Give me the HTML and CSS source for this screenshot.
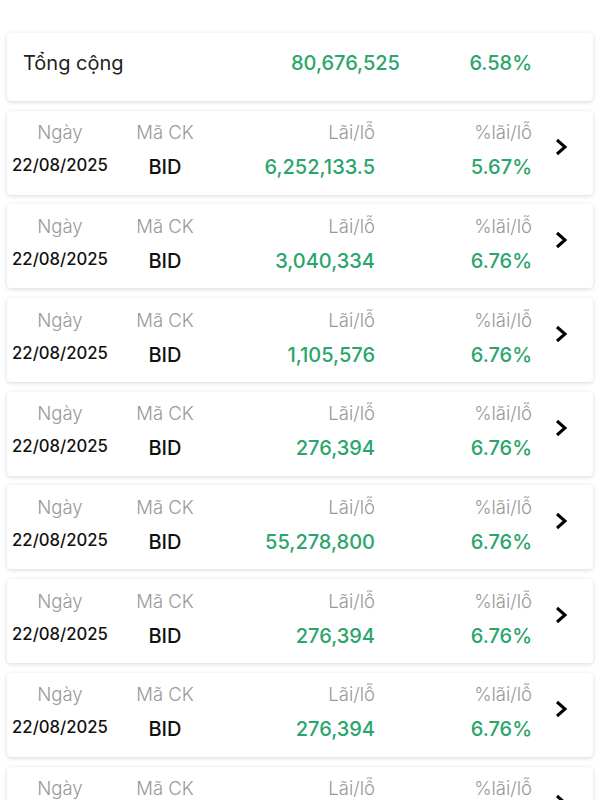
FILE: index.html
```html
<!doctype html>
<html lang="vi">
<head>
    <meta charset="utf-8">
    <title>Lãi/lỗ</title>
    <link rel="stylesheet" href="styles.css">
</head>
<body>
<div class="list">
    <div class="card total">
        <span class="total-name">Tổng cộng</span>
        <span class="total-sum green">80,676,525</span>
        <span class="total-pct green">6.58%</span>
    </div>

    <div class="card row">
        <span class="label c-date">Ngày</span>
        <span class="label c-code">Mã CK</span>
        <span class="label c-pl">Lãi/lỗ</span>
        <span class="label c-pct">%lãi/lỗ</span>
        <span class="chev"><svg width="14" height="18" viewBox="0 0 14 18"><path d="M3 2l8 7-8 7" fill="none" stroke="#000" stroke-width="3"/></svg></span>
        <span class="date c-date">22/08/2025</span>
        <span class="code c-code">BID</span>
        <span class="num green c-pl">6,252,133.5</span>
        <span class="num green c-pct">5.67%</span>
    </div>

    <div class="card row">
        <span class="label c-date">Ngày</span>
        <span class="label c-code">Mã CK</span>
        <span class="label c-pl">Lãi/lỗ</span>
        <span class="label c-pct">%lãi/lỗ</span>
        <span class="chev"><svg width="14" height="18" viewBox="0 0 14 18"><path d="M3 2l8 7-8 7" fill="none" stroke="#000" stroke-width="3"/></svg></span>
        <span class="date c-date">22/08/2025</span>
        <span class="code c-code">BID</span>
        <span class="num green c-pl">3,040,334</span>
        <span class="num green c-pct">6.76%</span>
    </div>

    <div class="card row">
        <span class="label c-date">Ngày</span>
        <span class="label c-code">Mã CK</span>
        <span class="label c-pl">Lãi/lỗ</span>
        <span class="label c-pct">%lãi/lỗ</span>
        <span class="chev"><svg width="14" height="18" viewBox="0 0 14 18"><path d="M3 2l8 7-8 7" fill="none" stroke="#000" stroke-width="3"/></svg></span>
        <span class="date c-date">22/08/2025</span>
        <span class="code c-code">BID</span>
        <span class="num green c-pl">1,105,576</span>
        <span class="num green c-pct">6.76%</span>
    </div>

    <div class="card row">
        <span class="label c-date">Ngày</span>
        <span class="label c-code">Mã CK</span>
        <span class="label c-pl">Lãi/lỗ</span>
        <span class="label c-pct">%lãi/lỗ</span>
        <span class="chev"><svg width="14" height="18" viewBox="0 0 14 18"><path d="M3 2l8 7-8 7" fill="none" stroke="#000" stroke-width="3"/></svg></span>
        <span class="date c-date">22/08/2025</span>
        <span class="code c-code">BID</span>
        <span class="num green c-pl">276,394</span>
        <span class="num green c-pct">6.76%</span>
    </div>

    <div class="card row">
        <span class="label c-date">Ngày</span>
        <span class="label c-code">Mã CK</span>
        <span class="label c-pl">Lãi/lỗ</span>
        <span class="label c-pct">%lãi/lỗ</span>
        <span class="chev"><svg width="14" height="18" viewBox="0 0 14 18"><path d="M3 2l8 7-8 7" fill="none" stroke="#000" stroke-width="3"/></svg></span>
        <span class="date c-date">22/08/2025</span>
        <span class="code c-code">BID</span>
        <span class="num green c-pl">55,278,800</span>
        <span class="num green c-pct">6.76%</span>
    </div>

    <div class="card row">
        <span class="label c-date">Ngày</span>
        <span class="label c-code">Mã CK</span>
        <span class="label c-pl">Lãi/lỗ</span>
        <span class="label c-pct">%lãi/lỗ</span>
        <span class="chev"><svg width="14" height="18" viewBox="0 0 14 18"><path d="M3 2l8 7-8 7" fill="none" stroke="#000" stroke-width="3"/></svg></span>
        <span class="date c-date">22/08/2025</span>
        <span class="code c-code">BID</span>
        <span class="num green c-pl">276,394</span>
        <span class="num green c-pct">6.76%</span>
    </div>

    <div class="card row">
        <span class="label c-date">Ngày</span>
        <span class="label c-code">Mã CK</span>
        <span class="label c-pl">Lãi/lỗ</span>
        <span class="label c-pct">%lãi/lỗ</span>
        <span class="chev"><svg width="14" height="18" viewBox="0 0 14 18"><path d="M3 2l8 7-8 7" fill="none" stroke="#000" stroke-width="3"/></svg></span>
        <span class="date c-date">22/08/2025</span>
        <span class="code c-code">BID</span>
        <span class="num green c-pl">276,394</span>
        <span class="num green c-pct">6.76%</span>
    </div>

    <div class="card row">
        <span class="label c-date">Ngày</span>
        <span class="label c-code">Mã CK</span>
        <span class="label c-pl">Lãi/lỗ</span>
        <span class="label c-pct">%lãi/lỗ</span>
        <span class="chev"><svg width="14" height="18" viewBox="0 0 14 18"><path d="M3 2l8 7-8 7" fill="none" stroke="#000" stroke-width="3"/></svg></span>
        <span class="date c-date">22/08/2025</span>
        <span class="code c-code">BID</span>
        <span class="num green c-pl">276,394</span>
        <span class="num green c-pct">6.76%</span>
    </div>
</div>
</body>
</html>
```

FILE: styles.css
```css
body {
    margin: 0;
    background: #fff;
    font-family: "Inter", "Liberation Sans", sans-serif;
    color: #111;
}
.list {
    display: flex;
    flex-direction: column;
    gap: 9.7px;
    padding: 33px 7px 0;
}
.card {
    background: #fff;
    border-radius: 4px;
    box-shadow: 0 1px 4px rgba(0, 0, 0, 0.16);
}
.green {
    color: #2aa56b;
}

/* dong tong cong */
.total {
    display: grid;
    grid-template-columns: 210px 167px 132px;
    align-items: center;
    height: 68px;
    padding: 0 0 9px 16px;
    box-sizing: border-box;
    font-size: 20px;
}
.total-name {
    color: #222;
}
.total-sum,
.total-pct {
    text-align: right;
    font-weight: 500;
}

/* tung dong giao dich */
.row {
    display: grid;
    grid-template-columns: 106px 104px 158px 157px 1fr;
    grid-template-rows: 35px 35px;
    height: 84px;
    padding-top: 4px;
    box-sizing: border-box;
    align-items: center;
}
.label {
    color: #999;
    font-size: 18.5px;
    font-weight: 300;
}
.c-date,
.c-code {
    text-align: center;
}
.c-pl,
.c-pct {
    text-align: right;
}
.date {
    font-size: 16.7px;
    font-weight: 500;
    margin-top: -4px;
}
.code {
    font-size: 20px;
    font-weight: 500;
}
.num {
    font-size: 20px;
    font-weight: 500;
}
.chev {
    grid-column: 5;
    grid-row: 1 / 3;
    padding-left: 22px;
    padding-bottom: 6px;
    display: flex;
    align-items: center;
}
```
